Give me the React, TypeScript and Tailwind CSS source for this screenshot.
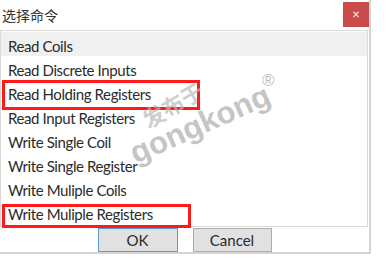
import React from "react";

const items = [
  "Read Coils",
  "Read Discrete Inputs",
  "Read Holding Registers",
  "Read Input Registers",
  "Write Single Coil",
  "Write Single Register",
  "Write Muliple Coils",
  "Write Muliple Registers",
];

export default function App() {
  return (
    <div
      className="relative w-[388px] h-[259px] bg-white overflow-hidden text-[#2b2b2b]"
      style={{ fontFamily: 'Lato, "Noto Sans", "Noto Sans CJK SC", sans-serif' }}
    >
      <div className="flex flex-col w-[371px] h-[254px] border-r-2 border-b-2 border-[#d4d4d4] bg-white">
        <div className="flex items-start justify-between h-[30px]">
          <span
            className="pl-[2px] pt-[5px] text-[14px] leading-[20px] text-[#333]"
            style={{ fontFamily: '"Noto Sans CJK SC", sans-serif' }}
          >
            选择命令
          </span>
          <div className="mt-[2px] flex h-[25px] w-[26px] items-center justify-center bg-[#c94c4c] text-[13px] leading-none text-white">
            ×
          </div>
        </div>
        <div className="mr-[1px] h-[198px] border border-[#d9d9d9] bg-white pt-[1px]">
          {items.map((t, i) => (
            <div
              key={t}
              className={
                "flex h-[24px] items-center pl-[7px] pt-[4px] text-[15px] tracking-[-0.4px] " +
                (i === 0 ? "bg-[#f0f0f0]" : "")
              }
            >
              {t}
            </div>
          ))}
        </div>
        <div className="flex flex-1 items-center justify-center gap-[15px] pt-[1px]">
          <div className="flex h-[24px] w-[80px] items-center justify-center border border-[#5b9bd5] bg-[#e1e1e1] pt-[1px] text-[15px]">
            OK
          </div>
          <div className="flex h-[24px] w-[79px] items-center justify-center border border-[#adadad] bg-[#e1e1e1] pt-[1px] text-[15px]">
            Cancel
          </div>
        </div>
      </div>

      {/* red highlight boxes */}
      <div className="pointer-events-none absolute left-[2px] top-[80px] h-[30px] w-[198px] border-[3px] border-[#ff1a1a]" />
      <div className="pointer-events-none absolute left-[2px] top-[204px] h-[24px] w-[189px] border-[3px] border-[#ff1a1a]" />

      {/* watermark */}
      <div
        className="pointer-events-none absolute left-[172px] top-[104px] -translate-x-1/2 -translate-y-1/2 -rotate-[30deg] whitespace-nowrap text-[22px] font-bold leading-none text-[#b8b8b8]/70"
        style={{ fontFamily: '"Noto Sans CJK SC", sans-serif' }}
      >
        发布于
      </div>
      <div
        className="pointer-events-none absolute left-[200px] top-[124px] -translate-x-1/2 -translate-y-1/2 -rotate-[24deg] whitespace-nowrap text-[31px] font-bold leading-none text-[#b5b5b5]/80"
        style={{ fontFamily: '"Liberation Sans", sans-serif' }}
      >
        gongkong
      </div>
      <div
        className="pointer-events-none absolute left-[262px] top-[72px] text-[17px] leading-none text-[#c0c0c0]"
        style={{ fontFamily: '"Liberation Sans", sans-serif' }}
      >
        ®
      </div>
    </div>
  );
}
